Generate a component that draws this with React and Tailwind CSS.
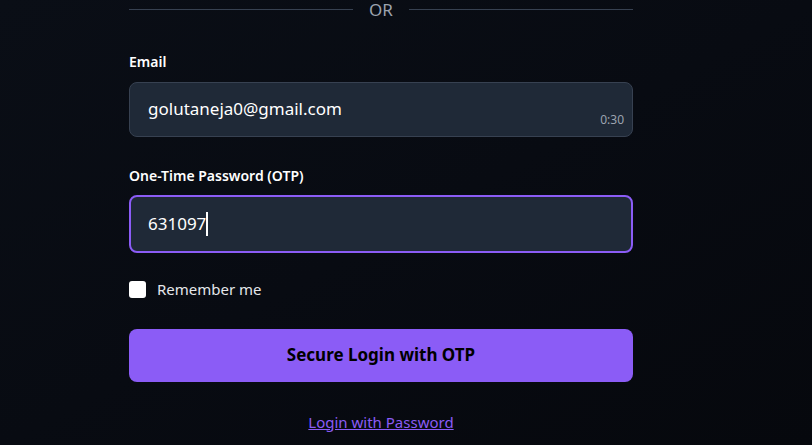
export default function App() {
  return (
    <div
      className="min-h-[445px] w-full bg-gradient-to-br from-[#0a0e16] via-[#080b12] to-[#06080d] flex pl-[129px]"
      style={{ fontFamily: '"Noto Sans", "Open Sans", sans-serif' }}
    >
      <div className="w-[504px] flex flex-col">
        <div className="flex items-center h-[19px]">
          <div className="flex-1 h-px bg-[#374151]" />
          <span className="px-4 text-[17px] leading-none text-[#9ca3af]">OR</span>
          <div className="flex-1 h-px bg-[#374151]" />
        </div>

        <label className="mt-[33px] text-[14px] font-semibold text-white leading-5">Email</label>
        <div className="relative mt-[10px] h-[55px] rounded-lg border border-[#374151] bg-[#1f2937] flex items-center px-[18px]">
          <span className="text-[17px] text-white -mt-[1px]">golutaneja0@gmail.com</span>
          <span className="absolute right-[8px] bottom-[10px] text-[12px] leading-none text-[#9ca3af]">0:30</span>
        </div>

        <label className="mt-[29px] text-[14px] font-semibold text-white leading-5">One-Time Password (OTP)</label>
        <div className="mt-[9px] h-[58px] rounded-lg border-2 border-[#8b5cf6] bg-[#1f2937] flex items-center px-[17px]">
          <span className="text-[17px] text-white">631097</span>
          <span className="w-[2px] h-[24px] bg-white" />
        </div>

        <div className="mt-[25px] flex items-center gap-[11px]">
          <span className="w-[17px] h-[17px] rounded-[3px] bg-white" />
          <span className="text-[15px] text-[#e5e7eb]">Remember me</span>
        </div>

        <button className="mt-[28px] h-[53px] rounded-lg bg-[#8b5cf6] text-black text-[17px] font-bold">
          Secure Login with OTP
        </button>

        <div className="mt-[28px] text-center">
          <a className="text-[15px] text-[#8b5cf6] underline">Login with Password</a>
        </div>
      </div>
    </div>
  );
}
